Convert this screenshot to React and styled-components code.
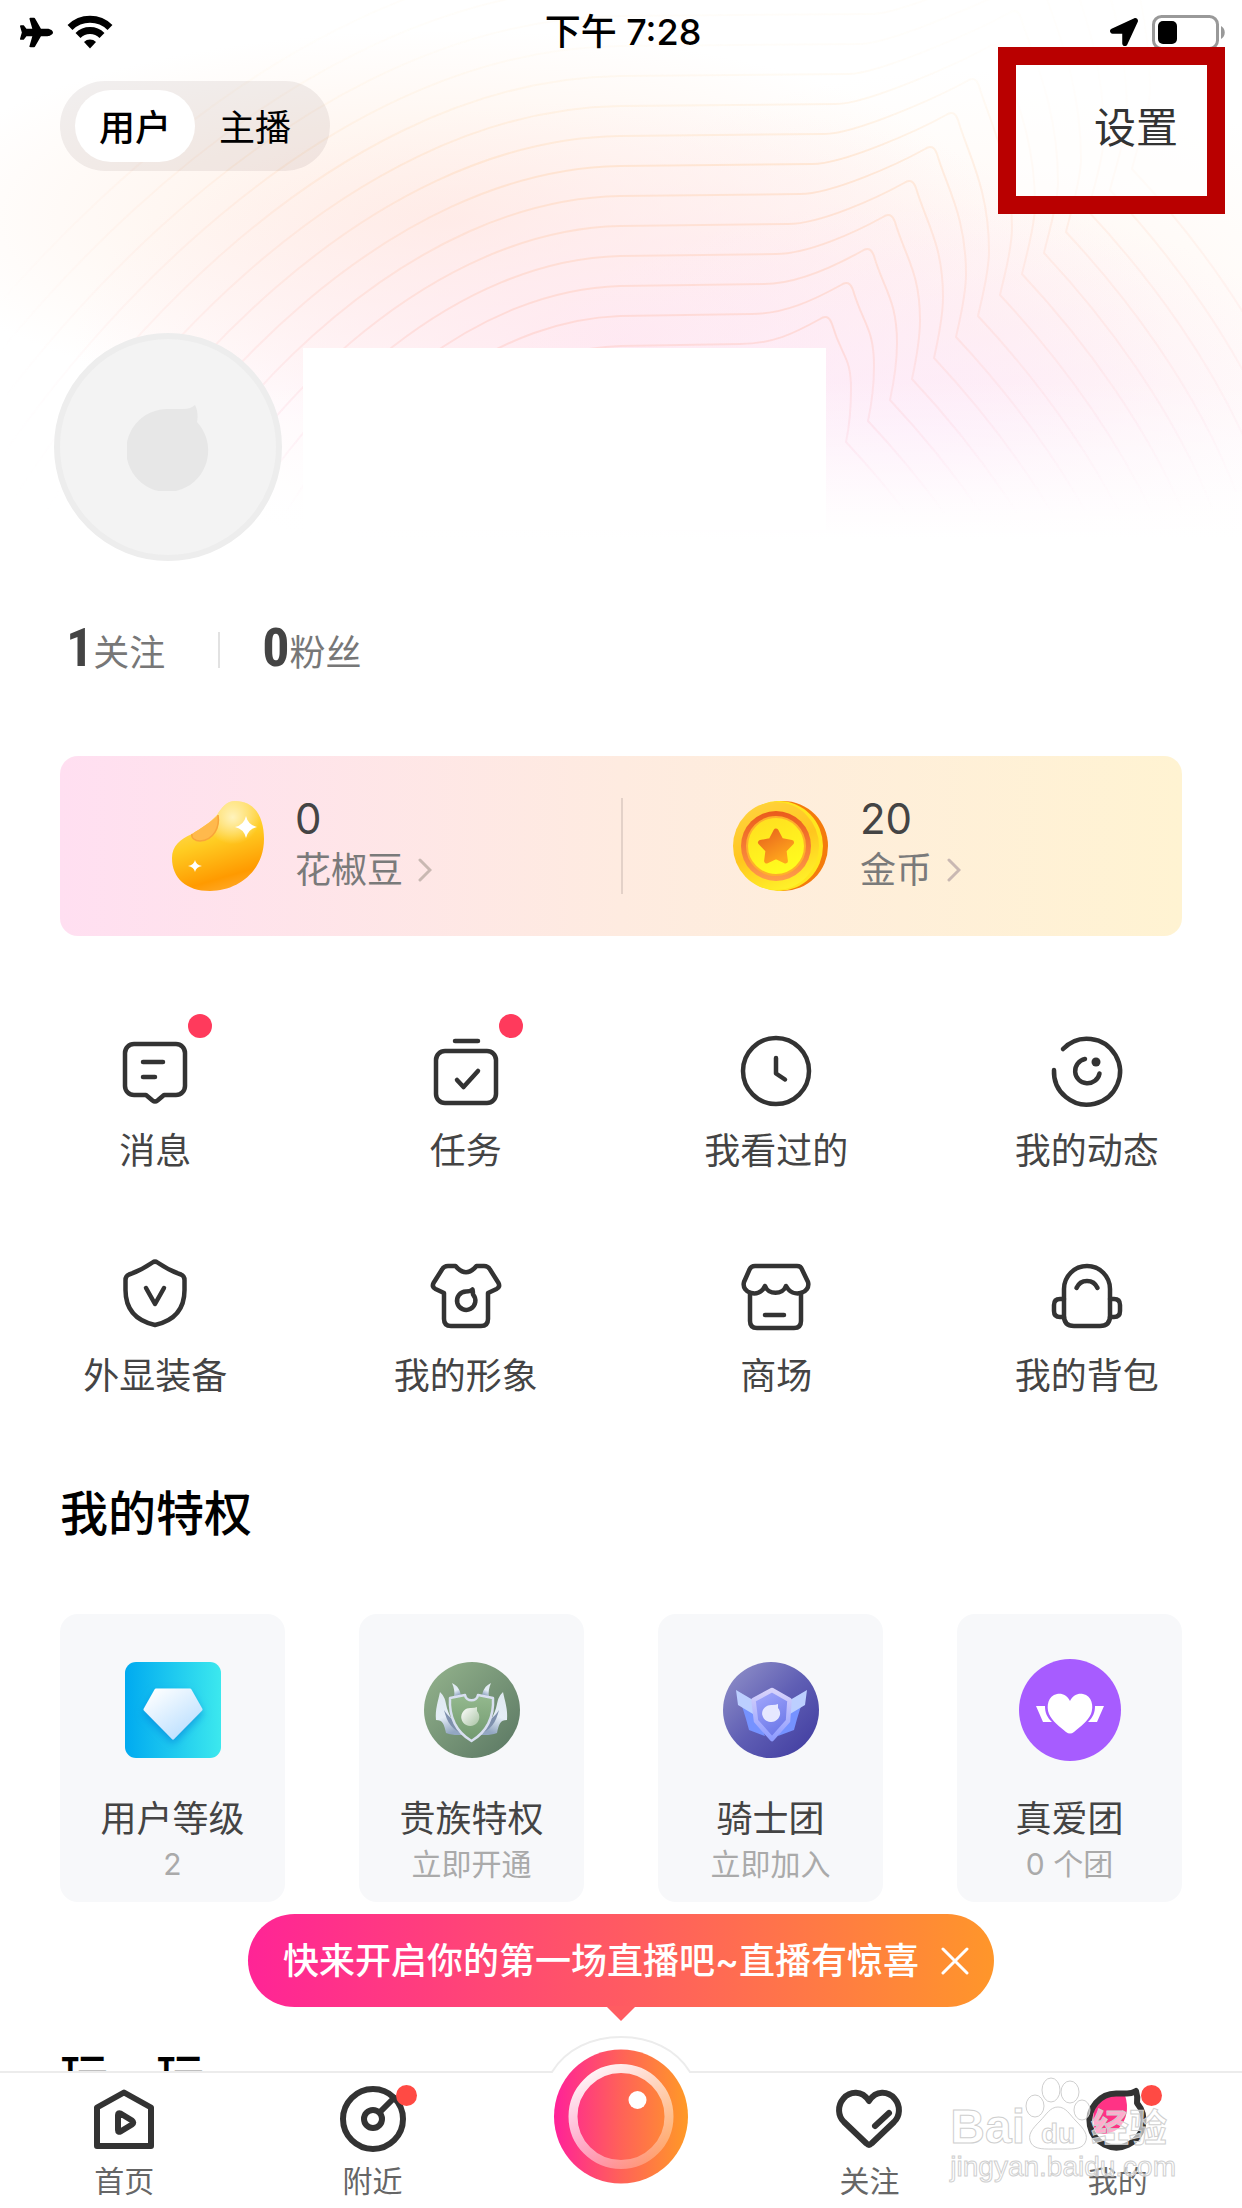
import React from 'react';
import styled, { createGlobalStyle } from 'styled-components';
import { FaPlane, FaLocationArrow } from 'react-icons/fa';

const GlobalStyle = createGlobalStyle`
  * {
    box-sizing: border-box;
  }
  body {
    margin: 0;
    background: #fff;
    font-family: Inter, 'Noto Sans CJK SC', sans-serif;
    color: #444;
  }
  button {
    border: none;
    background: none;
    padding: 0;
    margin: 0;
    font: inherit;
    color: inherit;
    cursor: pointer;
  }
  a {
    color: inherit;
    text-decoration: none;
  }
  h2, p, ul {
    margin: 0;
    padding: 0;
  }
  svg {
    display: block;
    flex: none;
  }
`;

/* page */

const Page = styled.div`
  position: relative;
  display: flex;
  flex-direction: column;
  height: 100vh;
  overflow: hidden;
`;

const Backdrop = styled.div`
  position: absolute;
  top: 0;
  left: 0;
  right: 0;
  height: 560px;
  overflow: hidden;
  background:
    linear-gradient(to top, #fff 20px, rgba(255, 255, 255, 0) 180px),
    radial-gradient(ellipse 36% 240px at 74% 440px, rgba(253, 234, 250, 0.9), rgba(253, 236, 250, 0)),
    radial-gradient(ellipse 44% 240px at 50% 340px, rgba(255, 231, 240, 0.9), rgba(255, 231, 240, 0)),
    radial-gradient(ellipse 44% 190px at 36% 220px, rgba(255, 236, 224, 0.9), rgba(255, 240, 230, 0)),
    radial-gradient(ellipse 36% 260px at 78% 330px, rgba(255, 243, 234, 0.8), rgba(255, 245, 236, 0)),
    #fff;
`;

const Content = styled.main`
  position: relative;
  flex: 1;
  min-height: 0;
  overflow-y: auto;
  scrollbar-width: none;
`;

/* status bar */

const StatusBar = styled.div`
  position: relative;
  display: grid;
  grid-template-columns: 1fr auto 1fr;
  align-items: center;
  height: 47px;
  padding: 14px 16px 0 20px;
  color: #000;
`;

const StatusSide = styled.div`
  display: flex;
  align-items: center;
  justify-content: ${(p) => (p.$end ? 'flex-end' : 'flex-start')};
  gap: 14px;
`;

const Clock = styled.span`
  font-size: 36px;
  line-height: 36px;
  font-weight: 500;
`;

/* top */

const TopRow = styled.header`
  display: flex;
  justify-content: space-between;
  align-items: flex-start;
  padding: 0 17px 0 60px;
`;

const Switcher = styled.div`
  display: flex;
  margin-top: 34px;
  height: 90px;
  padding: 9px 15px;
  border-radius: 45px;
  background: rgba(60, 30, 30, 0.07);
`;

const SwitchTab = styled.button`
  width: 120px;
  height: 72px;
  padding-bottom: 2px;
  border-radius: 36px;
  background: ${(p) => (p.$active ? '#fff' : 'transparent')};
  font-size: 36px;
  font-weight: ${(p) => (p.$active ? 500 : 400)};
  color: #000;
`;

const Settings = styled.button`
  display: flex;
  align-items: center;
  justify-content: flex-end;
  width: 227px;
  height: 167px;
  padding: 0 29px 12px 0;
  border: 18px solid #b90000;
  background: rgba(255, 255, 255, 0.6);
  font-size: 42px;
  color: #333;
`;

/* profile */

const Profile = styled.section`
  display: flex;
  align-items: flex-start;
  gap: 21px;
  margin-top: 119px;
  padding: 0 54px;
`;

const Avatar = styled.div`
  display: flex;
  align-items: center;
  justify-content: center;
  flex: none;
  width: 228px;
  height: 228px;
  border: 6px solid #ededed;
  border-radius: 50%;
  background: #f3f3f3;
`;

const NameBlock = styled.div`
  flex: 0 1 523px;
  height: 182px;
  margin-top: 15px;
  background: #fff;
`;

const Stats = styled.section`
  display: flex;
  align-items: center;
  height: 52px;
  margin-top: 63px;
  padding: 0 66px;
`;

const Stat = styled.a`
  display: flex;
  align-items: baseline;
  font-size: 36px;
  line-height: 48px;
  color: #777;

  strong {
    font-family: 'Liberation Sans Narrow', 'Roboto Condensed', Roboto, sans-serif;
    font-size: 54px;
    font-weight: 700;
    color: #444;
  }
`;

const StatLine = styled.i`
  width: 2px;
  height: 36px;
  margin: 0 42px 0 53px;
  background: #e2e2e2;
`;

/* wallet */

const Wallet = styled.section`
  display: grid;
  grid-template-columns: 1fr 1fr;
  align-items: center;
  height: 180px;
  margin: 80px 60px 0;
  border-radius: 18px;
  background: linear-gradient(90deg, #ffdff1, #feebe0 50%, #fff3d2);
`;

const WalletItem = styled.a`
  display: flex;
  align-items: center;
  gap: 31px;
  height: 96px;
  padding-left: 110px;
  border-left: 2px solid ${(p) => (p.$divided ? '#e3d1c8' : 'transparent')};
`;

const Amount = styled.div`
  font-size: 42px;
  line-height: 48px;
`;

const Currency = styled.div`
  display: flex;
  align-items: center;
  gap: 15px;
  font-size: 36px;
  line-height: 54px;
  color: #7a7a7a;
`;

/* shortcuts */

const Shortcuts = styled.nav`
  display: grid;
  grid-template-columns: repeat(4, 1fr);
  row-gap: 76px;
  margin-top: 90px;
`;

const Shortcut = styled.a`
  display: flex;
  flex-direction: column;
  align-items: center;
  gap: 11px;
  font-size: 36px;
  line-height: 48px;
`;

const IconSlot = styled.span`
  position: relative;
  display: block;
`;

const Dot = styled.i`
  position: absolute;
  top: ${(p) => (p.$small ? 2 : -12)}px;
  right: ${(p) => (p.$small ? -8 : -12)}px;
  width: ${(p) => (p.$small ? 21 : 24)}px;
  height: ${(p) => (p.$small ? 21 : 24)}px;
  border-radius: 50%;
  background: ${(p) => (p.$small ? '#ff4a44' : '#ff3a5c')};
`;

/* privileges */

const Title = styled.h2`
  margin-top: ${(p) => p.$top}px;
  padding: 0 60px;
  font-size: 48px;
  line-height: 72px;
  font-weight: 500;
  color: #000;
`;

const Cards = styled.section`
  display: grid;
  grid-template-columns: repeat(4, 1fr);
  gap: 74px;
  margin: 64px 60px 0;
`;

const Card = styled.a`
  display: flex;
  flex-direction: column;
  align-items: center;
  padding: 45px 0 18px;
  border-radius: 18px;
  background: #f7f8fa;
`;

const CardIcon = styled.div`
  display: flex;
  align-items: center;
  height: 102px;
`;

const CardName = styled.div`
  margin-top: 34px;
  font-size: 36px;
  line-height: 48px;
`;

const CardNote = styled.div`
  margin-top: 1px;
  font-size: 30px;
  line-height: 40px;
  color: #aaa;
`;

/* tab bar */

const TabBar = styled.nav`
  position: relative;
  display: grid;
  grid-template-columns: repeat(5, 1fr);
  padding: 10px 0 9px;
  border-top: 2px solid #ececec;
  background: #fff;
`;

const Tab = styled.a`
  display: flex;
  flex-direction: column;
  align-items: center;
  gap: 8px;
  font-size: 30px;
  line-height: 36px;
  color: #666;
`;

const Hump = styled.svg`
  position: absolute;
  top: -37px;
  left: 50%;
  transform: translateX(-50%);
`;

const LiveButton = styled.button`
  position: absolute;
  top: -24px;
  left: 50%;
  transform: translateX(-50%);
`;

const Tip = styled.div`
  position: absolute;
  top: -159px;
  left: 50%;
  transform: translateX(-50%);
  display: flex;
  align-items: center;
  gap: 22px;
  height: 93px;
  padding: 0 25px 0 35px;
  border-radius: 47px;
  background: linear-gradient(90deg, #ff2496, #ff5a62 50%, #ff962a);
  font-size: 36px;
  line-height: 48px;
  font-weight: 500;
  color: #fff;
  white-space: nowrap;

  &::after {
    content: '';
    position: absolute;
    top: 92px;
    left: 50%;
    margin-left: -15px;
    border: 15px solid transparent;
    border-top-color: #ff5c61;
    border-bottom: none;
  }
`;

const Watermark = styled.div`
  position: absolute;
  right: 66px;
  bottom: 25px;
  display: flex;
  flex-direction: column;
  align-items: flex-start;
  font-family: 'Liberation Sans', 'Noto Sans CJK SC', sans-serif;
  color: rgba(255, 255, 255, 0.6);
  -webkit-text-stroke: 1px #cfcfcf;
  pointer-events: none;
`;

const WatermarkRow = styled.div`
  display: flex;
  align-items: flex-end;
  font-size: 48px;
  line-height: 48px;
  font-weight: 700;
`;

const WatermarkCn = styled.span`
  font-size: 38px;
  line-height: 46px;
`;

const WatermarkUrl = styled.span`
  font-size: 28px;
  line-height: 32px;
`;

/* drawings */

const contour = (k) => {
  const y = 346 - 30 * k;
  const px = 828 + 21 * k;
  const py = 316 - 34 * k;
  const ex = 851 + 23 * k;
  const ey = 389 - 23 * k;
  const vx = 846 + 22 * k;
  const vy = 442 - 21 * k;
  const sx = 350 - 40 * k;
  const flat = 740 + 12 * k;
  return `M${sx} 540 C${sx + 75} 400 ${530 - 24 * k} ${y + 4} 620 ${y}
    L${flat} ${y - 2} C${flat + 32} ${y - 2} ${px - 35} ${py + 18} ${px - 8} ${py + 3}
    Q${px} ${py - 3} ${px + 4} ${py + 8}
    C${px + 14} ${py + 42} ${ex} ${ey - (ey - py) * 0.45} ${ex} ${ey}
    C${ex} ${ey + 22} ${vx + 3} ${vy - 14} ${vx} ${vy}
    C${vx + 58} ${vy + 62} ${vx + 130} ${vy + 155} ${vx + 170} ${vy + 260}`;
};

const Contours = () => (
  <svg width="100%" height="560" viewBox="0 0 1242 560" preserveAspectRatio="xMidYMin slice" fill="none">
    <defs>
      <linearGradient id="lineTone" gradientUnits="userSpaceOnUse" x1="0" y1="50" x2="0" y2="515">
        <stop offset="0" stopColor="#fff3dc" stopOpacity="0.2" />
        <stop offset="0.25" stopColor="#ffe2cc" />
        <stop offset="0.6" stopColor="#ffd6d2" />
        <stop offset="0.8" stopColor="#fddfe9" />
        <stop offset="1" stopColor="#ffeaf5" stopOpacity="0" />
      </linearGradient>
      <linearGradient id="fadeX" x1="0" x2="1" y1="0" y2="0">
        <stop offset="0" stopColor="#000" />
        <stop offset="0.15" stopColor="#555" />
        <stop offset="0.4" stopColor="#fff" />
        <stop offset="0.68" stopColor="#fff" />
        <stop offset="0.8" stopColor="#888" />
        <stop offset="1" stopColor="#444" />
      </linearGradient>
      <mask id="lineMask">
        <rect width="1242" height="560" fill="url(#fadeX)" />
      </mask>
    </defs>
    <g stroke="url(#lineTone)" strokeWidth="2" opacity="0.8" mask="url(#lineMask)">
      {Array.from({ length: 14 }, (_, k) => (
        <path key={k} d={contour(k)} />
      ))}
    </g>
  </svg>
);

const Wifi = () => (
  <svg width="46" height="34" viewBox="0 0 46 34" fill="none" stroke="#000" strokeWidth="7">
    <path d="M3 12.500a28.500 28.500 0 0 1 40 0" />
    <path d="M11 20.500a17 17 0 0 1 24 0" />
    <path d="M23 33.500l-6-6.500a8.500 8.500 0 0 1 12 0z" fill="#000" stroke="none" />
  </svg>
);

const Battery = () => (
  <svg width="74" height="35" viewBox="0 0 74 35">
    <rect x="1.500" y="1.500" width="64" height="32" rx="8" fill="none" stroke="#999" strokeWidth="3" />
    <rect x="6" y="6" width="19" height="23" rx="5" />
    <path d="M69 11v13c5-2.500 5-10.500 0-13z" fill="#999" />
  </svg>
);

const Drop = () => (
  <svg width="82" height="88" viewBox="-1 -2 82 88">
    <path
      d="M41 4h14c5 0 8-1 12-4 3 6 3 12 2 17a41 41.500 0 1 1-28-13z"
      fill="#e7e7e7"
    />
  </svg>
);

const Chevron = () => (
  <svg width="14" height="24" viewBox="0 0 14 24" fill="none" stroke="#c9b8b2" strokeWidth="3" strokeLinecap="round">
    <path d="M2 2l10 10L2 22" />
  </svg>
);

const Bean = () => (
  <svg width="92" height="90" viewBox="0 0 92 90">
    <defs>
      <linearGradient id="bean" x1="0.300" y1="0" x2="0.600" y2="1">
        <stop offset="0" stopColor="#ffe27a" />
        <stop offset="0.45" stopColor="#ffcc22" />
        <stop offset="0.85" stopColor="#ff9a00" />
        <stop offset="1" stopColor="#ffa826" />
      </linearGradient>
      <radialGradient id="beanShine" cx="0.660" cy="0.180" r="0.300">
        <stop offset="0" stopColor="#fff3bd" />
        <stop offset="1" stopColor="#fff3bd" stopOpacity="0" />
      </radialGradient>
    </defs>
    <path d="M63 0C84 0 92 18 92 38c0 32-26 52-54 52C14 90 0 77 0 57c0-12 8-19 20-24C29 27 38 22 45 14 50 6 55 0 63 0z" fill="url(#bean)" />
    <path d="M63 0C84 0 92 18 92 38c0 32-26 52-54 52C14 90 0 77 0 57c0-12 8-19 20-24C29 27 38 22 45 14 50 6 55 0 63 0z" fill="url(#beanShine)" />
    <path d="M46 14c2 12-4 25-18 26-5 0-9-3-8-7 9-6 18-11 26-19z" fill="#ffb94c" />
    <path d="M46 14c2 12-4 25-18 26-5 0-9-3-8-7" fill="none" stroke="#f9a43a" strokeWidth="1.500" />
    <path d="M74 15q2 9 11 11-9 2-11 11-2-9-11-11 9-2 11-11zM23 59q1 5 7 6-6 1-7 6-1-5-7-6 6-1 7-6z" fill="#fff" />
  </svg>
);

const Coin = () => (
  <svg width="96" height="90" viewBox="0 0 96 90">
    <defs>
      <linearGradient id="coinFace" x1="0.300" y1="0" x2="0.700" y2="1">
        <stop offset="0" stopColor="#ffd23c" />
        <stop offset="0.5" stopColor="#ffc61e" />
        <stop offset="1" stopColor="#fff52a" />
      </linearGradient>
      <linearGradient id="coinRing" x1="0" y1="0" x2="0" y2="1">
        <stop offset="0" stopColor="#ea5a1c" />
        <stop offset="1" stopColor="#ff9d4a" />
      </linearGradient>
      <linearGradient id="coinCore" x1="0" y1="0" x2="0.400" y2="1">
        <stop offset="0" stopColor="#ffdc20" />
        <stop offset="1" stopColor="#fffc1e" />
      </linearGradient>
      <linearGradient id="coinStar" x1="0" y1="0" x2="0.600" y2="1">
        <stop offset="0" stopColor="#e8641c" />
        <stop offset="1" stopColor="#ffa51c" />
      </linearGradient>
    </defs>
    <ellipse cx="50" cy="45" rx="45" ry="45" fill="#f47b0c" />
    <ellipse cx="46" cy="45" rx="44" ry="45" fill="#ffe61e" />
    <ellipse cx="43" cy="45" rx="43" ry="44" fill="url(#coinFace)" />
    <circle cx="43" cy="45" r="35" fill="url(#coinRing)" />
    <circle cx="43" cy="45" r="29" fill="url(#coinCore)" stroke="#ffb02a" strokeWidth="2" />
    <path
      d="M43 30l5 9.500 10.500 2-7.500 7.800 1.400 10.700-9.400-4.600-9.400 4.600 1.400-10.700-7.500-7.800 10.500-2z"
      fill="url(#coinStar)"
      stroke="url(#coinStar)"
      strokeWidth="5"
      strokeLinejoin="round"
    />
  </svg>
);

const LineIcon = ({ children }) => (
  <svg
    width="90"
    height="90"
    viewBox="0 0 90 90"
    fill="none"
    stroke="#333"
    strokeWidth="4.5"
    strokeLinecap="round"
    strokeLinejoin="round"
  >
    {children}
  </svg>
);

const shortcuts = [
  {
    name: '消息',
    dot: true,
    icon: (
      <>
        <path d="M24 18h42a9 9 0 0 1 9 9v33a9 9 0 0 1-9 9H54l-6.500 5.500q-2.500 2-5 0L36 69H24a9 9 0 0 1-9-9V27a9 9 0 0 1 9-9z" />
        <path d="M33 36h20M33 51h12" />
      </>
    ),
  },
  {
    name: '任务',
    dot: true,
    icon: (
      <>
        <rect x="15" y="25" width="60" height="52" rx="9" />
        <path d="M34 15h23M36 54l6.500 7L57 45" />
      </>
    ),
  },
  {
    name: '我看过的',
    icon: (
      <>
        <circle cx="45" cy="45" r="33" />
        <path d="M45 32v15.500l9 6" />
      </>
    ),
  },
  {
    name: '我的动态',
    icon: (
      <>
        <path d="M12 44a33 33 0 1 0 9-21" />
        <path d="M43 33a12.300 12.300 0 1 0 14.500 14.500" />
        <circle cx="54" cy="36" r="4.500" fill="#333" stroke="none" />
      </>
    ),
  },
  {
    name: '外显装备',
    icon: (
      <>
        <path d="M42.500 11.500q2.500-1.700 5 0C54 16 62 20.500 71 23.500q3.500 1.500 3.500 5.500v10C74.500 59 63 70 45 74 27 70 15.500 59 15.500 39V29q0-4 3.500-5.500C28 20.500 36 16 42.500 11.500z" />
        <path d="M36 37l9 16 9-16" />
      </>
    ),
  },
  {
    name: '我的形象',
    icon: (
      <>
        <path d="M34.500 15Q45 27.500 55.500 15H63q4 0 6 3.500L77.500 32q2 4-2 6L67 42v26q0 7-7 7H30q-7 0-7-7V42l-8.500-4q-4-2-2-6L21 18.500q2-3.500 6-3.500z" />
        <path d="M45 40.500q4.500 0 6.500-2 .5 2.500.5 5a9.200 9.200 0 1 1-7-3z" />
      </>
    ),
  },
  {
    name: '商场',
    icon: (
      <>
        <path d="M24 15h42q4 0 5 3.500L77 31c3 11-15 17-22 4-3 9-18 9-21 0C28 48 10 42 13 31l5.500-12.500q1.500-3.500 5.500-3.500z" />
        <path d="M19 42v28q0 7 7 7h37q7 0 7-7V42M34 64h19" />
      </>
    ),
  },
  {
    name: '我的背包',
    icon: (
      <>
        <path d="M22 38a23 23 0 0 1 46 0v27q0 10-10 10H32q-10 0-10-10z" />
        <path d="M34.500 37q3-7 10.500-7t10.500 7M22 48h-4q-6 0-6 6v6q0 6 6 6h4M68 48h4q6 0 6 6v6q0 6-6 6h-4" />
      </>
    ),
  },
];

const Gem = () => (
  <svg width="96" height="96" viewBox="0 0 96 96">
    <defs>
      <linearGradient id="gemBg">
        <stop offset="0" stopColor="#00aaf0" />
        <stop offset="1" stopColor="#3ce8ee" />
      </linearGradient>
      <linearGradient id="gem" x1="0.100" y1="0" x2="0.900" y2="1">
        <stop offset="0" stopColor="#fff" />
        <stop offset="1" stopColor="#b4dcff" />
      </linearGradient>
      <filter id="gemShadow" x="-0.300" y="-0.300" width="1.600" height="1.600">
        <feDropShadow dx="0" dy="4" stdDeviation="4" floodColor="#0078d8" floodOpacity="0.6" />
      </filter>
    </defs>
    <rect width="96" height="96" rx="11" fill="url(#gemBg)" />
    <path
      d="M31 28h34l11 19.500L48 76 20 47.500z"
      fill="url(#gem)"
      stroke="url(#gem)"
      strokeWidth="3"
      strokeLinejoin="round"
      filter="url(#gemShadow)"
    />
  </svg>
);

const NobleWing = () => (
  <>
    <path d="M16 30c-2 10-5 17-4 28 7 0 8 4 10 13 8 3 16 2 22 1C30 66 24 52 22 42c-1-6-3-9-6-12z" fill="url(#nobleWing)" />
    <path d="M20 48c3 12 8 21 22 25l-6-12c-8-3-12-7-16-13z" fill="#7e90ad" />
    <path d="M28 21c6 3 8 7 9 13l-7 1c1-5 0-9-2-14z" fill="url(#nobleWing)" />
  </>
);

const Noble = () => (
  <svg width="96" height="96" viewBox="0 0 96 96">
    <defs>
      <linearGradient id="nobleBg" x1="0.100" y1="0.100" x2="0.900" y2="0.900">
        <stop offset="0" stopColor="#8fae89" />
        <stop offset="1" stopColor="#5f7c66" />
      </linearGradient>
      <linearGradient id="nobleWing" x1="0" y1="0" x2="0.300" y2="1">
        <stop offset="0" stopColor="#dfe8ef" />
        <stop offset="0.6" stopColor="#e4edf6" />
        <stop offset="1" stopColor="#93a7c2" />
      </linearGradient>
      <linearGradient id="nobleShield" x1="0" y1="0" x2="0" y2="1">
        <stop offset="0" stopColor="#94b98e" />
        <stop offset="1" stopColor="#71986f" />
      </linearGradient>
      <linearGradient id="nobleDrop" x1="0" y1="0" x2="1" y2="1">
        <stop offset="0" stopColor="#fff" />
        <stop offset="1" stopColor="#a9c3a4" />
      </linearGradient>
    </defs>
    <circle cx="48" cy="48" r="48" fill="url(#nobleBg)" />
    <NobleWing />
    <g transform="matrix(-1 0 0 1 95 0)">
      <NobleWing />
    </g>
    <path
      d="M26 36l15-3c1 7 12 7 13 0l15 3c1 18-5 33-21.500 43C31 69 25 54 26 36z"
      fill="url(#nobleShield)"
      stroke="#d8dff0"
      strokeWidth="2.5"
      strokeLinejoin="round"
    />
    <path d="M47 46q4 0 6-1v4a9 9 0 1 1-6-3z" fill="url(#nobleDrop)" />
  </svg>
);

const Knight = () => (
  <svg width="96" height="96" viewBox="0 0 96 96">
    <defs>
      <linearGradient id="knightBg" x1="0.100" y1="0.100" x2="0.900" y2="0.900">
        <stop offset="0" stopColor="#8a8ac6" />
        <stop offset="0.5" stopColor="#5f5eb4" />
        <stop offset="1" stopColor="#4440a2" />
      </linearGradient>
      <linearGradient id="knightRim" x1="0" y1="0" x2="0" y2="1">
        <stop offset="0" stopColor="#d8d3fb" />
        <stop offset="1" stopColor="#8f9cff" />
      </linearGradient>
      <linearGradient id="knightFill" x1="0" y1="0" x2="0.500" y2="1">
        <stop offset="0" stopColor="#a7acff" />
        <stop offset="1" stopColor="#6c78e8" />
      </linearGradient>
    </defs>
    <circle cx="48" cy="48" r="48" fill="url(#knightBg)" />
    <path d="M19 44l4 13 3 11 16 6-8-22zM78 44l-4 13-3 11-16 6 8-22z" fill="#7592ff" />
    <path d="M13 28l17 10v14L15 43zM84 28L67 38v14l15-9z" fill="#bccfff" />
    <path
      d="M49 28l17.500 10L65 59 49 77 33 59l-2.500-21z"
      fill="url(#knightFill)"
      stroke="url(#knightRim)"
      strokeWidth="4.5"
      strokeLinejoin="round"
    />
    <path d="M49 43q4 0 6-1v4a9 8.500 0 1 1-6-3z" fill="#e6e8ff" />
  </svg>
);

const Love = () => (
  <svg width="102" height="102" viewBox="0 0 102 102" fill="#fff">
    <circle cx="51" cy="51" r="51" fill="#a75cff" />
    <path d="M51 42c3-6 8-8 13-7 9 2 11 12 8 20-3 7-11 13-17 18q-4 3-8 0C41 68 33 62 30 55c-3-8-1-18 8-20 5-1 10 1 13 7z" />
    <path d="M17 47h9c0 7 2 11 7 16h-9zM85 47h-9c0 7-2 11-7 16h9z" />
  </svg>
);

const cards = [
  { name: '用户等级', note: '2', icon: <Gem /> },
  { name: '贵族特权', note: '立即开通', icon: <Noble /> },
  { name: '骑士团', note: '立即加入', icon: <Knight /> },
  { name: '真爱团', note: '0 个团', icon: <Love /> },
];

const TabIcon = ({ children }) => (
  <svg
    width="72"
    height="72"
    viewBox="0 0 72 72"
    fill="none"
    stroke="#333"
    strokeWidth="6"
    strokeLinecap="round"
    strokeLinejoin="round"
  >
    {children}
  </svg>
);

const HomeIcon = () => (
  <TabIcon>
    <path d="M36 9.500L63 24.500V63H9V24.500z" />
    <path d="M30 32q0-2.500 2.500-1.500L44 37.500q2.500 2 0 4l-11.500 7q-2.500 1-2.500-1.500z" />
  </TabIcon>
);

const NearIcon = () => (
  <TabIcon>
    <circle cx="36" cy="36" r="30" />
    <circle cx="36" cy="36" r="9" />
    <path d="M43 29l14-14" />
  </TabIcon>
);

const HeartIcon = () => (
  <TabIcon>
    <path d="M36 18C29 7 17 8 10.500 15.500 4 23 5 33 11 39l22.500 21.500q2.500 2.500 5 0L61 39c6-6 7-16 .5-23.500C55 8 43 7 36 18z" />
    <path d="M42 43l14-13" />
  </TabIcon>
);

const MineIcon = () => (
  <TabIcon>
    <path d="M13 24Q20 12 43 12 49 32 37 45q-10 8-23 5-5-13-1-26z" fill="#ff3385" stroke="none" />
    <path d="M36 10.500h9q5 0 9-2.500 2 6 1 12a27 27 0 1 1-19-9.500z" />
  </TabIcon>
);

const LiveIcon = () => (
  <svg width="135" height="135" viewBox="0 0 135 135">
    <defs>
      <linearGradient id="live">
        <stop offset="0" stopColor="#ff2199" />
        <stop offset="0.5" stopColor="#ff6258" />
        <stop offset="1" stopColor="#ff9a26" />
      </linearGradient>
      <linearGradient id="liveRing" x1="0.200" y1="0" x2="0.800" y2="1">
        <stop offset="0" stopColor="#fff" stopOpacity="0.95" />
        <stop offset="1" stopColor="#fff" stopOpacity="0.25" />
      </linearGradient>
    </defs>
    <circle cx="67.500" cy="67.500" r="67" fill="url(#live)" />
    <circle cx="67.500" cy="67.500" r="48" fill="none" stroke="url(#liveRing)" strokeWidth="9" />
    <circle cx="84" cy="51" r="9" fill="#fff" />
  </svg>
);

const Paw = () => (
  <svg width="66" height="74" viewBox="0 0 66 74" fill="#fff" fillOpacity="0.6" stroke="#cfcfcf" strokeWidth="1">
    <ellipse cx="10" cy="29" rx="9" ry="11" />
    <ellipse cx="26" cy="13" rx="9" ry="12" />
    <ellipse cx="45" cy="15" rx="9" ry="11" />
    <ellipse cx="57" cy="33" rx="8" ry="10" />
    <path d="M33 30c8 0 12 8 18 14 8 8 13 14 9 22-4 7-14 6-27 6S10 73 6 66c-4-8 1-14 9-22 6-6 10-14 18-14z" />
    <text x="33" y="66" fontSize="28" textAnchor="middle" strokeWidth="1">du</text>
  </svg>
);

export default function App() {
  return (
    <Page>
      <GlobalStyle />
      <Backdrop>
        <Contours />
      </Backdrop>
      <StatusBar>
        <StatusSide>
          <FaPlane size={33} />
          <Wifi />
        </StatusSide>
        <Clock>下午 7:28</Clock>
        <StatusSide $end>
          <FaLocationArrow size={28} />
          <Battery />
        </StatusSide>
      </StatusBar>

      <Content>
        <TopRow>
          <Switcher>
            <SwitchTab type="button" $active>用户</SwitchTab>
            <SwitchTab type="button">主播</SwitchTab>
          </Switcher>
          <Settings type="button">设置</Settings>
        </TopRow>

        <Profile>
          <Avatar>
            <Drop />
          </Avatar>
          <NameBlock />
        </Profile>

        <Stats>
          <Stat href="#following"><strong>1</strong>关注</Stat>
          <StatLine />
          <Stat href="#fans"><strong>0</strong>粉丝</Stat>
        </Stats>

        <Wallet>
          <WalletItem href="#beans">
            <Bean />
            <div>
              <Amount>0</Amount>
              <Currency>花椒豆<Chevron /></Currency>
            </div>
          </WalletItem>
          <WalletItem href="#coins" $divided>
            <Coin />
            <div>
              <Amount>20</Amount>
              <Currency>金币<Chevron /></Currency>
            </div>
          </WalletItem>
        </Wallet>

        <Shortcuts>
          {shortcuts.map((item) => (
            <Shortcut href="#shortcut" key={item.name}>
              <IconSlot>
                <LineIcon>{item.icon}</LineIcon>
                {item.dot && <Dot />}
              </IconSlot>
              {item.name}
            </Shortcut>
          ))}
        </Shortcuts>

        <Title $top={78}>我的特权</Title>
        <Cards>
          {cards.map((card) => (
            <Card href="#card" key={card.name}>
              <CardIcon>{card.icon}</CardIcon>
              <CardName>{card.name}</CardName>
              <CardNote>{card.note}</CardNote>
            </Card>
          ))}
        </Cards>

        <Title $top={139}>玩一玩</Title>
      </Content>

      <TabBar>
        <Hump width="146" height="40" viewBox="0 0 146 40">
          <path d="M4 40v-4C18 13 44 1 73 1s55 12 69 35v4z" fill="#fff" />
          <path d="M0 36h4C18 13 44 1 73 1s55 12 69 35h4" fill="none" stroke="#ececec" strokeWidth="2" />
        </Hump>
        <Tab href="#home">
          <HomeIcon />
          首页
        </Tab>
        <Tab href="#near">
          <IconSlot>
            <NearIcon />
            <Dot $small />
          </IconSlot>
          附近
        </Tab>
        <span />
        <Tab href="#follow">
          <HeartIcon />
          关注
        </Tab>
        <Tab href="#mine">
          <IconSlot>
            <MineIcon />
            <Dot $small />
          </IconSlot>
          我的
        </Tab>
        <LiveButton type="button" aria-label="开播">
          <LiveIcon />
        </LiveButton>
        <Tip>
          快来开启你的第一场直播吧~直播有惊喜
          <button type="button" aria-label="关闭">
            <svg width="28" height="28" viewBox="0 0 28 28" stroke="#fff" strokeWidth="3" strokeLinecap="round">
              <path d="M2 2l24 24M26 2L2 26" />
            </svg>
          </button>
        </Tip>
        <Watermark>
          <WatermarkRow>
            Bai
            <Paw />
            <WatermarkCn>经验</WatermarkCn>
          </WatermarkRow>
          <WatermarkUrl>jingyan.baidu.com</WatermarkUrl>
        </Watermark>
      </TabBar>
    </Page>
  );
}
